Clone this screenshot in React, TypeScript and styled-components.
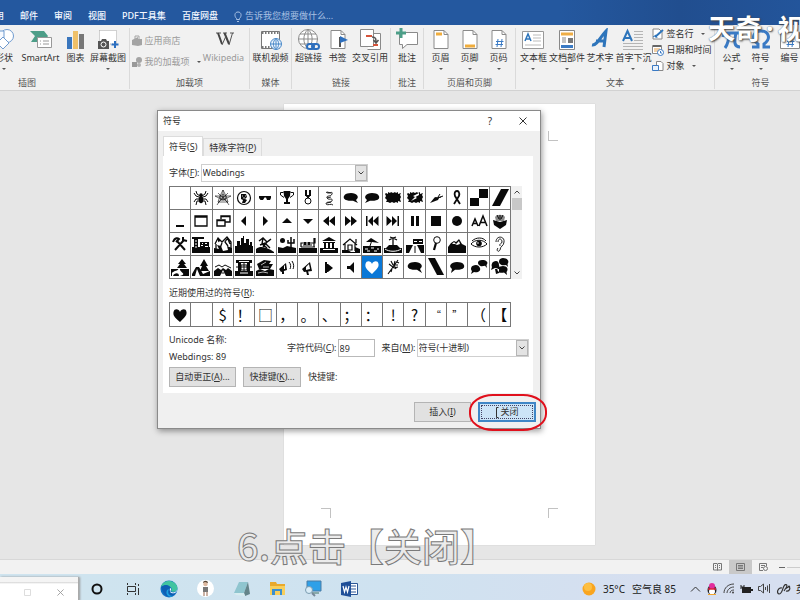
import React from "react";
import styled, { createGlobalStyle, css } from "styled-components";

const GlobalStyle = createGlobalStyle`
  *, *::before, *::after { box-sizing: border-box; }
  body { margin: 0; overflow: hidden; }
  body, button, input, select {
    font-family: "Noto Sans", "Noto Sans CJK SC", sans-serif;
    font-size: 9px;
    line-height: 12px;
    color: #333;
  }
  button, input, select { margin: 0; padding: 0; border: 0; border-radius: 0; background: none; }
  svg { display: block; flex: none; }
`;

const Screen = styled.div`
  position: relative;
  display: flex;
  flex-direction: column;
  height: 100vh;
  overflow: hidden;
  background: #e6e6e6;
`;

/* ---------- ribbon ---------- */

const TabBar = styled.nav`
  display: flex;
  flex: none;
  align-items: flex-end;
  gap: 16px;
  height: 25px;
  padding-bottom: 3px;
  background: linear-gradient(90deg, #24589f 70%, #214e8f 85%, #23559b);
`;

const RibbonTab = styled.button<{ $clipped?: boolean }>`
  flex: none;
  color: #f4f8ff;
  font-weight: 500;
  white-space: nowrap;
  ${(p) => p.$clipped && css`
    display: flex;
    justify-content: flex-end;
    width: 4px;
    overflow: hidden;
  `}
`;

const TellMe = styled.button`
  display: flex;
  align-items: center;
  gap: 3px;
  color: #a9c1e3;
  white-space: nowrap;
`;

const Ribbon = styled.div`
  display: flex;
  flex: none;
  height: 66px;
  overflow: hidden;
  background: #f1f1f1;
  border-bottom: 1px solid #d2d2d2;
`;

const Group = styled.section<{ $w: number }>`
  display: flex;
  flex: none;
  flex-direction: column;
  justify-content: space-between;
  width: ${(p) => p.$w}px;
  margin: 3px 0 1px;
  border-right: 1px solid #dadada;
`;

const GroupTools = styled.div<{ $shift?: number }>`
  display: flex;
  justify-content: ${(p) => (p.$shift ? "flex-start" : "center")};
  margin-left: ${(p) => -(p.$shift ?? 0)}px;
`;

const GroupLabel = styled.div<{ $w?: number }>`
  width: ${(p) => (p.$w ? `${p.$w}px` : "auto")};
  color: #555;
  text-align: center;
`;

const ToolButton = styled.button<{ $w: number; $muted?: boolean }>`
  display: flex;
  flex: none;
  flex-direction: column;
  align-items: center;
  gap: 2px;
  width: ${(p) => p.$w}px;
  color: ${(p) => (p.$muted ? "#9a9a9a" : "#333")};
  white-space: nowrap;
`;

const Caret = styled.span`
  width: 0;
  height: 0;
  margin: 2px 0 0;
  border: 2px solid transparent;
  border-top-color: #555;
  border-bottom-width: 0;
`;

const SmallTools = styled.div<{ $gap: number; $top?: number }>`
  display: flex;
  flex-direction: column;
  gap: ${(p) => p.$gap}px;
  padding-top: ${(p) => p.$top ?? 0}px;
`;

const SmallTool = styled.button<{ $muted?: boolean }>`
  display: flex;
  align-items: center;
  gap: 2px;
  color: ${(p) => (p.$muted ? "#9a9a9a" : "#333")};
  white-space: nowrap;

  ${Caret} { margin: 0 0 0 5px; }
`;

/* ---------- document ---------- */

const Workspace = styled.main`
  display: flex;
  flex: 1;
  min-height: 0;
  padding: 13px 25.6% 14px 35.5%;
`;

const Paper = styled.div`
  display: grid;
  flex: 1;
  grid-template-columns: auto auto;
  place-content: space-between;
  padding: 27px 37px;
  background: #fff;
  box-shadow: 0 0 1px #bbb;
`;

const CropMark = styled.span<{ $edges: string }>`
  width: 10px;
  height: 10px;
  border: 0 solid #c2c2c2;
  border-width: ${(p) => p.$edges};
`;

const StatusBar = styled.footer`
  display: flex;
  flex: none;
  align-items: stretch;
  justify-content: flex-end;
  height: 15px;
  background: #f2f2f2;
  border-top: 1px solid #d8d8d8;
`;

const ViewButton = styled.button<{ $on?: boolean }>`
  display: flex;
  align-items: center;
  justify-content: center;
  width: 23px;
  background: ${(p) => (p.$on ? "#c9c9c9" : "transparent")};
`;

const ZoomTrack = styled.span`
  display: flex;
  align-items: center;
  gap: 2px;
  width: 25px;
  padding-left: 4px;

  &::before { content: ""; width: 6px; height: 1px; background: #666; }
  &::after { content: ""; flex: 1; height: 1px; background: #ccc; }
`;

/* ---------- taskbar ---------- */

const Taskbar = styled.footer`
  display: flex;
  flex: none;
  align-items: center;
  justify-content: space-between;
  height: 26px;
  padding-top: 3px;
  overflow: hidden;
  background: linear-gradient(90deg, #cfe4ef 10%, #cfe2f0 50%, #d6dff0 80%);
`;

const TaskApps = styled.div`
  display: flex;
  align-items: center;
`;

const TaskApp = styled.button`
  display: flex;
  align-items: center;
  justify-content: center;
  width: 36px;
  height: 23px;
`;

const MiniWindow = styled.div`
  display: flex;
  align-items: center;
  justify-content: flex-end;
  gap: 26px;
  width: 79px;
  height: 24px;
  padding: 8px 14px 0 0;
  background: linear-gradient(#f4f4f4 5px, #d4d4d4 5px, #fff 7px);
  border-right: 1px solid #aaa;
  box-shadow: 1px 0 2px #999;
`;

const MiniButton = styled.button`
  display: flex;
`;

const Tray = styled.div`
  display: flex;
  align-items: center;
  gap: 5px;
  margin-right: -6px;
  color: #222;
  font-size: 10px;
  white-space: nowrap;
`;

const Weather = styled.button`
  display: flex;
  align-items: center;
  gap: 7px;
  margin-right: 9px;
  color: #222;
  font-size: 10px;
`;

/* ---------- dialog ---------- */

const Dialog = styled.div`
  position: absolute;
  top: 110px;
  left: 157px;
  display: flex;
  flex-direction: column;
  width: 384px;
  background: #f0f0f0;
  border: 1px solid #8a8a8a;
  box-shadow: 1px 2px 6px rgba(0, 0, 0, 0.4);
`;

const DialogTitle = styled.header`
  display: flex;
  align-items: center;
  height: 20px;
  padding: 0 12px 0 5px;
  background: #fff;
`;

const TitleText = styled.span`
  flex: 1;
`;

const TitleButton = styled.button`
  display: flex;
  justify-content: center;
  width: 10px;
  margin-left: 23px;
  font-size: 10px;
`;

const TabStrip = styled.div`
  display: flex;
  align-items: flex-end;
  height: 25px;
  padding: 0 5px;
`;

const DialogTab = styled.button<{ $active?: boolean }>`
  height: ${(p) => (p.$active ? 20 : 18)}px;
  padding: 0 5px;
  background: ${(p) => (p.$active ? "#fff" : "#f0f0f0")};
  border: 1px solid #dcdcdc;
  border-bottom: 0;
`;

const Panel = styled.div`
  display: flex;
  flex-direction: column;
  align-items: flex-start;
  margin: 0 7px 0 5px;
  padding: 8px 4px 6px 6px;
  background: #fff;
`;

const FieldRow = styled.div`
  display: flex;
  align-items: center;
`;

const SelectBox = styled.span<{ $w: number }>`
  display: flex;
  width: ${(p) => p.$w}px;
  height: 18px;
  border: 1px solid #cfcfcf;

  select {
    flex: 1;
    min-width: 0;
    padding-left: 1px;
    appearance: none;
    outline: 0;
  }
`;

const SelectArrow = styled.span`
  display: flex;
  align-items: center;
  justify-content: center;
  width: 12px;
  background: #e3e3e3;
  border: 1px solid #b5b5b5;
`;

const SymbolArea = styled.div`
  display: flex;
  margin-top: 4px;
`;

const SymbolGrid = styled.div<{ $row: number }>`
  display: grid;
  grid-template-columns: repeat(16, minmax(0, 1fr));
  grid-auto-rows: ${(p) => p.$row}px;
  width: 342px;
  border: 1px solid #777;
  border-width: 1px 0 0 1px;
`;

const SymbolCell = styled.button<{ $selected?: boolean; $small?: boolean }>`
  display: flex;
  align-items: center;
  justify-content: center;
  overflow: hidden;
  color: ${(p) => (p.$selected ? "#fff" : "#0a0a0a")};
  background: ${(p) => (p.$selected ? "#0a78d7" : "#fff")};
  border-right: 1px solid #777;
  border-bottom: 1px solid #777;
  font-family: "Noto Sans CJK SC", sans-serif;
  font-size: ${(p) => (p.$small ? 10 : 15)}px;
  line-height: 22px;
`;

const ScrollBar = styled.div`
  display: flex;
  flex-direction: column;
  align-items: center;
  width: 11px;
  padding: 4px 0;
  background: #f1f1f1;
`;

const ScrollThumb = styled.span`
  width: 10px;
  height: 12px;
  margin: 4px 0 auto;
  background: #c8c8c8;
`;

const RecentLabel = styled.div`
  margin: 8px 0 3px;
`;

const InfoRow = styled.div`
  display: flex;
  align-items: center;
  width: 100%;
  margin-top: 4px;
`;

const NameBlock = styled.div`
  width: 118px;
  line-height: 17px;
`;

const FieldLabel = styled.label<{ $gap?: number }>`
  margin: 0 1px 0 ${(p) => p.$gap ?? 0}px;
  white-space: nowrap;
`;

const CodeInput = styled.input`
  width: 37px;
  height: 18px;
  padding: 0 1px;
  border: 1px solid #b9b9b9;
`;

const ActionRow = styled.div`
  display: flex;
  align-items: center;
  gap: 7px;
  margin-top: 2px;
`;

const PushButton = styled.button<{ $w: number; $focus?: boolean }>`
  display: flex;
  align-items: center;
  justify-content: center;
  width: ${(p) => p.$w}px;
  height: 20px;
  background: #e1e1e1;
  border: 1px solid #b4b4b4;
  ${(p) => p.$focus && css`
    background: #cce4f7;
    border: 2px solid #3f86c6;
    outline: 1px dotted #446;
    outline-offset: -4px;
  `}
`;

const DialogFooter = styled.div`
  display: flex;
  justify-content: flex-end;
  gap: 7px;
  padding: 9px 4px 6px;
`;

const RedRing = styled.span`
  position: absolute;
  right: -7px;
  bottom: -3px;
  width: 78px;
  height: 37px;
  border: 2px solid #e0101c;
  border-radius: 24px / 17px;
  pointer-events: none;
`;

/* ---------- overlays ---------- */

const Subtitle = styled.p`
  position: absolute;
  bottom: 33px;
  left: 237px;
  margin: 0;
  color: rgba(234, 234, 234, 0.9);
  font-family: "Noto Sans CJK SC", sans-serif;
  font-size: 38px;
  font-weight: 500;
  line-height: 44px;
  white-space: nowrap;
  -webkit-text-stroke: 1px #7a7a7a;
`;

const Watermark = styled.p`
  position: absolute;
  top: 11px;
  left: 708px;
  display: flex;
  gap: 4px;
  margin: 0;
  color: #fff;
  font-family: "Noto Sans CJK SC", sans-serif;
  font-size: 27px;
  font-weight: 700;
  line-height: 34px;
  white-space: nowrap;
  text-shadow: 1px 1px 2px #444, 0 0 1px #555;
`;

const WatermarkDot = styled.span`
  font-family: "Noto Sans", sans-serif;
`;

/* ---------- symbol glyphs, drawn on a 20 x 20 field ---------- */

const line = { fill: "none", stroke: "currentColor" } as const;

const glyphs: React.ReactNode[] = [
  null,
  <g key="spider">
    <ellipse cx="10" cy="11.500" rx="2.300" ry="3.800" /><circle cx="10" cy="7" r="1.800" />
    <path {...line} d="M9 8 6 6 5 3M8 9 5 8 3 5M8 11 5 11 3 14M9 13 6 13 5 17M11 8 14 6 15 3M12 9 15 8 17 5M12 11 15 11 17 14M11 13 14 13 15 17" />
  </g>,
  <g key="web" {...line} strokeWidth=".6">
    <path d="M10 2V12M2 8 18 8M4 17 10 8 16 17M2 8 10 12 18 8M10 2 7 8 5 14H15L13 8ZM7 8 10 6 13 8 12 12H8ZM5 5 15 15M15 5 5 15" />
  </g>,
  <g key="face">
    <circle {...line} cx="10" cy="10" r="6.500" strokeWidth="1.200" />
    <path d="M7 6H12L13 9 11 11 13 12 11 15H8L9 12 7 11Z" /><path stroke="#fff" strokeWidth=".8" d="M8 8H9M11 8H12M9 10H11" />
  </g>,
  <path key="glasses" d="M4 8H16V10L15 12H12L11 9.500H9.500L8 12H5.500L4 10Z" />,
  <g key="trophy"><path d="M6.500 3H13.500L13 8 11 11V14H13V16H7V14H9V11L7 8Z" /><path {...line} d="M6.500 4.500H3.500V7L7 9.500M13.500 4.500H16.500V7L13 9.500" /></g>,
  <g key="medal"><path d="M7 2H9V8H7ZM11 2H13V8H11ZM9 7H11V10H9Z" /><path {...line} d="M7.500 7 10 10 12.500 7" /><circle {...line} cx="10" cy="13" r="3" /></g>,
  <path key="scroll" {...line} strokeWidth=".9" d="M7 4C10 7 14 2 13 6 12 9 7 7 8 10 10 13 14 9 13 13 12 15 7 13 7 16 9 18 12 15 14 17M8 4 12 5M8 10 12 9M8 15 12 14" />,
  <path key="speech-r" d="M10 5C4 5 2 8 3 10.500 5 13 9 13 12 12.700L17 15 15 12C19 9 16 5 10 5Z" />,
  <path key="speech-l" d="M10 5C16 5 18 8 17 10.500 15 13 11 13 8 12.700L3 15 5 12C1 9 4 5 10 5Z" />,
  <path key="burst" d="M3 5 5 6 5 4 7 5 8 4 10 5 12 4 13 5 15 4 15 6 18 5 17 7 18 9 17 11 18 14 15 13 15 15 13 14 11 15 9 14 7 15 5 14 3 14 4 12 2 10 3 8 2 6Z" />,
  <g key="flash"><path d="M3 5 5 6 5 4 7 5 8 4 10 5 12 4 13 5 15 4 15 6 18 5 17 7 18 9 17 11 18 14 15 13 15 15 13 14 11 15 9 14 7 15 5 14 3 14 4 12 2 10 3 8 2 6Z" /><path fill="#fff" d="M14 5 8 8 10 9 6 13 12 10 10.500 9 14 7Z" /></g>,
  <g key="carrot"><path d="M4 15 9 9 13 10 12 12Z" /><path {...line} d="M12 10 17 8M12 9 14 6M10 10 15 9" /></g>,
  <path key="ribbon" {...line} strokeWidth="1.800" d="M7 16 12 8C13 4 11 3 10 3 8 3 7 5 8 8L13 16" />,
  <path key="checker" d="M10 1H19V10H10ZM1 10H10V18H1Z" />,
  <path key="slash" d="M11 1H19L10 18H2Z" />,

  <path key="min" d="M6 14H14V16H6Z" />,
  <path key="max" {...line} strokeWidth="1.300" d="M4 5H16V15H4ZM4 6.200H16" />,
  <path key="restore" {...line} strokeWidth="1.400" d="M8 8V5H17V11H12M8 5.600H17M4 9H12V15H4ZM4 9.600H12" />,
  <path key="left" d="M12 5V15L7 10Z" />,
  <path key="right" d="M8 5V15L13 10Z" />,
  <path key="up" d="M5 12H15L10 7Z" />,
  <path key="down" d="M5 8H15L10 13Z" />,
  <path key="rew" d="M10 5V15L4 10ZM16 5V15L10 10Z" />,
  <path key="ff" d="M4 5V15L10 10ZM10 5V15L16 10Z" />,
  <path key="prev" d="M4 5H5.500V15H4ZM11 5V15L6 10ZM16.500 5V15L11 10Z" />,
  <path key="next" d="M3.500 5V15L9 10ZM9 5V15L14 10ZM14.500 5H16V15H14.500Z" />,
  <path key="pause" d="M6 5H9V15H6ZM11 5H14V15H11Z" />,
  <path key="stop" d="M5 5H15V15H5Z" />,
  <circle key="rec" cx="10" cy="10" r="5" />,
  <g key="aa" {...line} strokeWidth="1.500"><path d="M3 15 6 8 9 15M4 12.500H8M10 15 14 5 18 15M11.500 11.500H16.500" /></g>,
  <g key="hat"><path d="M3 9 10 11 17 9 16 14 10 18 4 14Z" /><path d="M5 6C7 3 13 3 15 6L14 10H6Z" fill="#888" /><path {...line} d="M10 4V9M7 4 9 8M13 4 11 8" /></g>,

  <g key="tools" {...line} strokeWidth="2"><path d="M5 16 14 6M7 7 15 16M3 8C5 3 8 4 9 5L6 8M13 3V6L17 7" /></g>,
  <g key="crane"><path d="M1 13H19V19H1ZM3 3H7V17H3ZM1 3H13V5H1ZM9 8H18V17H9Z" /><path stroke="#fff" d="M4 7H6M4 10H6M4 13H6M11 9.500H12M14 9.500H16M10 11.500H12M14 12.500H17" /></g>,
  <g key="houses"><path {...line} strokeWidth="1.300" d="M2 10 5 4 9 8 14 3 18 8V17M3 10V17M9 9 7 14M14 5 12 8 15 12M5 4 6 8M14 3 17 10" /><path d="M1 14 6 15 4 11 8 12 10 17 15 16 14 12 19 14V19H1Z" /></g>,
  <path key="skyline" d="M1 12H3V7H6V11H7V4H9V2H10V9H12V5H15V11H16V8H18V12H19V19H1Z" />,
  <g key="island"><path d="M1 15C6 11 13 14 19 18V19H1Z" /><path {...line} strokeWidth="1.400" d="M4 7 8 4 12 8 16 5M8 4 7 10 12 14M5 11 10 9 15 14M12 8 8 13M15 6 8 11" /></g>,
  <g key="desert"><circle cx="5.500" cy="6.500" r="2.500" /><path d="M1 13 6 14 10 12 19 14V19H1Z" /><path {...line} strokeWidth="1.500" d="M14 3V14M11 6V9H14M17 5V9H14" /></g>,
  <g key="factory"><path d="M1 14H19V19H1Z" /><path {...line} d="M3 13V9H17V4M16 4V13M5 11H14M3 13H17" strokeWidth="1.200" /><path d="M6 8H8V11H6ZM10 8H12V11H10Z" /></g>,
  <g key="temple"><path d="M1 14H19V19H1ZM3 7 10 3 17 7ZM4 8H16V9H4ZM5 9H7V15H5ZM9 9H11V15H9ZM13 9H15V15H13Z" /><path stroke="#fff" d="M4 15.500H16" /></g>,
  <g key="home"><path {...line} d="M2 11 9 5 16 11M4 10V17M14 10V17M7 11H11V16H7ZM15 5V9" strokeWidth="1.200" /><path d="M1 16H7L10 18H19V19H1ZM14 13 19 15V18H14Z" /></g>,
  <g key="beach"><path d="M4 8 9 4 17 9 10 8Z" /><path {...line} d="M10 6 8 12" /><path d="M1 12H19V19H1Z" /><path stroke="#fff" d="M3 15H6M9 14H12M15 15H17M5 17H8M12 17H15" /></g>,
  <g key="palm"><path {...line} strokeWidth="1.300" d="M10 12V5M6 6 10 4 14 6M7 3 10 4 13 3" /><path d="M6 11H14L17 14H3ZM1 14H19V19H1Z" /><path fill="none" stroke="#fff" d="M2 15C6 18 14 18 18 15" /></g>,
  <g key="highway"><path d="M1 11H19V19H1ZM8 5H18V10H8Z" /><path fill="#fff" d="M8 11H12L16 19H4Z" /><path {...line} d="M10 12V19" /><path stroke="#fff" d="M9 7.500H12M14 7.500H17" /></g>,
  <g key="lens"><circle {...line} cx="11" cy="6" r="3.300" /><path {...line} strokeWidth="2.200" d="M10 9 8 16" /></g>,
  <g key="mountain"><path d="M1 13 4 9 7 7 9 8 12 5 15 10 19 12V19H1Z" /><path d="M5 10 7 8 9 10 12 7 13 10 10 11 8 10Z" fill="#fff" /></g>,
  <g key="eye"><path {...line} strokeWidth="1" d="M2 10C6 5 14 5 18 10 14 14 6 14 2 10ZM3 7C7 3 14 3 17 7" /><circle cx="10" cy="9.500" r="2.800" /><circle cx="9" cy="9" r=".8" fill="#fff" /></g>,
  <path key="ear" {...line} strokeWidth=".9" d="M6 8C6 1 15 2 14 8 14 12 10 12 10 16 8 19 6 16 8 14M8 8C8 4 12 4 12 8 12 10 9 9 10 12" />,

  <g key="road"><path d="M12 2 16 7H14L17 11H7L10 7H8ZM1 12H8C10 13 3 14 2 16V19H1ZM10 12H19V19H10C18 17 9 15 10 12ZM3 19C4 16 9 15 9 19Z" /></g>,
  <g key="camp"><path d="M13 2 17 9H15L18 14H9L11 9H9ZM1 17 5 10 8 10 12 17 19 14V19H1Z" /><path fill="#fff" d="M6 12 9 19H4Z" /></g>,
  <g key="valley"><path d="M1 14 5 11 8 13 10 11 13 13 15 11 19 14V19H13L10 13 7 19H1Z" /><path {...line} d="M2 10 6 8 9 10 12 8 18 11M8.500 16H11.500" /></g>,
  <g key="stadium"><path d="M1 14H19V19H1ZM2 3H18V6H2ZM4 6H7V15H4ZM13 6H16V15H13Z" /><path {...line} d="M7 8H13V13H7ZM10 4V16M2 10H18" /><path stroke="#fff" d="M5 4.500H15M6 16H14" /></g>,
  <g key="ship"><path d="M2 7 9 3 16 4 14 7 18 7 15 12H4Z" /><path d="M1 14 5 12 10 14 14 12 19 13V19H1Z" /><path stroke="#fff" strokeWidth=".7" d="M6 8 11 5M8 10H14M3 16 8 15 13 16" /></g>,
  <g key="horns"><path d="M2 12 9 6 10 13 4 15ZM5 14H7V17H5Z" /><path fill="#fff" d="M7 9 8 8V12L7 12Z" /><path {...line} d="M12 5C14 7 14 10 13 12M15 4C17 7 17 10 16 12" /></g>,
  <g key="horn"><path d="M4 12 12 5 14 14 6 15ZM8 14H10L11 18H9Z" /><path fill="#fff" d="M8 10 11 7 12 12 8 13Z" /></g>,
  <path key="vol-r" d="M6 7H9L14 11 9 15H6ZM6 5H8V16H6Z" />,
  <path key="vol-l" d="M13 5V16L9 12H6V9H9Z" />,
  <path key="heart" d="M10 17C4 12 3 10 3.500 7 4.500 3 9 4 10 7 11 4 16 3 16.500 7 17 10 15 12 10 17Z" />,
  <path key="fly" {...line} strokeWidth="1.100" d="M5 17 10 10 15 3M8 4 10 8 15 8M6 7 11 11 15 10M12 4 11 8 13 12M9 12 8 15M14 5 16 6" />,
  <path key="talk-r" d="M10 5C4 5 2 8 3 10.500 5 13 9 13 12 12.700L17 16 15 12C19 9 16 5 10 5Z" />,
  <path key="backslash" d="M2 1H9L18 18H11Z" />,
  <path key="talk-l" d="M10 5C16 5 18 8 17 10.500 15 13 11 13 8 12.700L4 16 5 12C1 9 4 5 10 5Z" />,
  <path key="two" d="M13 3C9 3 8 6 10 8 12 10 14 9 16 8.800L18 11 17.500 8C20 5 17 3 13 3ZM7 8C2 8 1 12 3 14L2 17 5 15C9 16 12 14 11 11 10 9 9 8 7 8Z" />,
  <path key="three" d="M13 1C9 1 8 5 10 7 12 9 14 8 16 8L18 10 17.500 7C20 4 17 1 13 1ZM6 4C2 4 1 8 2 10L1 13 5 11C9 12 10 10 9 8 9 6 8 4 6 4ZM13 9C9 9 6 12 8 14 9 16 12 16 14 15.500L17 18 16.500 15C19 12 17 9 13 9ZM5 12 9 12 9 16 6 17Z" />,
];

const SELECTED = 57;
const recent = ["♥", "", "$", "！", "□", "，", "。", "、", "；", "：", "!", "?", "“", "”", "（", "【"];

/* ---------- ribbon icons, drawn on a 22 x 22 field ---------- */

const Icon = ({ children, w = 22, h = 22, vb = "0 0 22 22" }: { children: React.ReactNode; w?: number; h?: number; vb?: string }) => (
  <svg width={w} height={h} viewBox={vb} fill="none" aria-hidden="true">{children}</svg>
);

const Sheet = ({ children }: { children?: React.ReactNode }) => (
  <Icon>
    <path d="M4 2.500H14L18 6.500V20.500H4Z" fill="#fff" stroke="#8a8a8a" />
    <path d="M14 2.500V6.500H18" stroke="#8a8a8a" />
    {children}
  </Icon>
);

const icons = {
  shapes: <Icon><circle cx="14" cy="8" r="6.500" stroke="#6f9bd0" fill="#fff" /><path d="M2 3H11V12H2Z" stroke="#6f9bd0" fill="#f7faff" /><path d="M10 9 16 15 10 21 4 15Z" fill="#fff" stroke="#6f9bd0" /></Icon>,
  smartart: <Icon><path d="M0 3H14L18 8 14 14H1L5 8Z" fill="#4d9e88" /><path d="M7.500 9.500H21.500V19.500H7.500Z" fill="#fff" stroke="#999" /><path d="M10 13H11M10 16H11M13 13H19M13 16H19" stroke="#999" /></Icon>,
  chart: <Icon><path d="M2 9H7V21H2Z" fill="#3a76bd" /><path d="M8 3H13V21H8Z" fill="#efc069" /><path d="M14 6H19V21H14Z" fill="#777" /></Icon>,
  shot: <Icon><path d="M2.500 2.500H19.500V16H2.500Z" fill="#fff" stroke="#aaa" strokeDasharray="1 1" /><path d="M1 13H4L5 11H9L10 13H12V21H1Z" fill="#555" /><circle cx="6.500" cy="16.500" r="2.500" stroke="#fff" /><path d="M18 13V20M14.500 16.500H21.500" stroke="#2b6fc0" strokeWidth="2" /></Icon>,
  store: <Icon w={10} h={12} vb="0 0 10 12"><path d="M0 5 6 2V11L0 10ZM6 4H10V10L6 11Z" fill="#a4a4a4" /><path d="M3 4V1H7V4" stroke="#a4a4a4" /></Icon>,
  addins: <Icon w={10} h={12} vb="0 0 10 12"><circle cx="7" cy="4" r="3" fill="#a4a4a4" /><path d="M0 6H5V11H0Z" fill="#999" /><circle cx="7" cy="9" r="2" fill="#b0b0b0" /></Icon>,
  video: <Icon><path d="M1.500 3.500H19.500V20.500H1.500Z" fill="#fff" stroke="#777" /><path d="M2 5H19M2 19H19" stroke="#777" strokeWidth="2" strokeDasharray="1.500 1.500" /><circle cx="16" cy="16" r="5.500" fill="#eaf3fc" stroke="#4b8ac9" /><path d="M10.500 16H21.500M16 10.500V21.500M16 10.500C12.500 13 12.500 19 16 21.500M16 10.500C19.500 13 19.500 19 16 21.500" stroke="#4b8ac9" /></Icon>,
  link: <Icon><circle cx="10" cy="11" r="9.500" fill="#fff" stroke="#8b8b8b" /><path d="M.5 11H19.500M10 1.500V20.500M2 6H18M2 16H18M10 1.500C4.500 6 4.500 16 10 20.500M10 1.500C15.500 6 15.500 16 10 20.500" stroke="#8b8b8b" /><rect x="9" y="16" width="7" height="5" rx="2.500" fill="#f1f1f1" stroke="#2e6fbd" strokeWidth="2" /><rect x="14" y="16" width="7" height="5" rx="2.500" stroke="#2e6fbd" strokeWidth="2" /></Icon>,
  bookmark: <Sheet><path d="M13 9V19" stroke="#555" strokeWidth="2" /><path d="M13 8 21 12 13 15Z" fill="#2e6fbd" /></Sheet>,
  crossref: <Icon><path d="M12.500 5.500H21.500V21.500H8.500" fill="#fff" stroke="#8a8a8a" /><path d="M1.500 1.500H14.500V18.500H1.500Z" fill="#fff" stroke="#8a8a8a" /><path d="M7 8H13M14 17H19" stroke="#d5543b" strokeWidth="2" /><path d="M13 9C17 9 17 11 17 14M14.500 12 17 15 19.500 12" stroke="#555" strokeWidth="1.500" /></Icon>,
  comment: <Icon><path d="M3.500 4.500H21.500V16.500H11L6.500 20.500V16.500H3.500Z" fill="#fff" stroke="#8a8a8a" /><path d="M5 0V10M0 5H10" stroke="#4d9e88" strokeWidth="3" /></Icon>,
  header: <Sheet><path d="M6 6H12" stroke="#f0ad3d" strokeWidth="3" /></Sheet>,
  footer: <Sheet><path d="M6 18H16" stroke="#f0ad3d" strokeWidth="3" /></Sheet>,
  pageno: <Sheet><path d="M10 11 9 19M14 11 13 19M8 13.500H15.500M7.500 16.500H15" stroke="#3a7ac4" /></Sheet>,
  textbox: <Icon><path d="M.5 3.500H21.500V20.500H.5Z" fill="#fff" stroke="#999" /><path d="M3 13 6 6 9 13M4.500 11H8" stroke="#2e75bb" strokeWidth="1.500" /><path d="M11 7H19M11 10H19M11 13H19M3 17H19" stroke="#bbb" /></Icon>,
  parts: <Icon><path d="M3.500 2.500H18.500V21.500H3.500Z" fill="#fff" stroke="#888" /><path d="M5 6H17" stroke="#eead45" strokeWidth="3" /><path d="M6 10H10M6 12H10M6 14H10" stroke="#888" /><path d="M12 10H17V15H12Z" fill="#777" /><path d="M5 18.500H17" stroke="#3a7ac4" strokeWidth="3" /></Icon>,
  wordart: <Icon><path d="M3 17C8 18 12 8 17 3L15 19M7 13H16" stroke="#2e75bb" strokeWidth="3" /></Icon>,
  dropcap: <Icon><path d="M1 13 5.500 3 10 13M3 10H8" stroke="#2e75bb" strokeWidth="2" /><path d="M12 3.500H21M12 6.500H21M12 9.500H21M12 12.500H21M1 15.500H21M1 18.500H21M1 21.500H21" stroke="#b5b5b5" /></Icon>,
  sign: <Icon w={12} h={12} vb="0 0 12 12"><path d="M1 1H7L10 4V11H1Z" fill="#fff" stroke="#888" /><path d="M3 9 11 2" stroke="#2e75bb" strokeWidth="2" /><path d="M1 9 4 7 5 10" stroke="#2e75bb" /></Icon>,
  date: <Icon w={12} h={12} vb="0 0 12 12"><path d="M.5 1.500H9.500V9.500H.5Z" fill="#fff" stroke="#888" /><path d="M1 2H9" stroke="#666" strokeWidth="2" /><path d="M2 5H8M2 7H6" stroke="#e5a14f" /><circle cx="8.500" cy="8.500" r="3" fill="#fff" stroke="#3a7ac4" /><path d="M8.500 7V9H10" stroke="#3a7ac4" /></Icon>,
  object: <Icon w={12} h={12} vb="0 0 12 12"><path d="M4.500 1.500H9L11 3.500V10.500H4.500Z" fill="#fff" stroke="#888" /><path d="M.5 5.500H6.500V10.500H.5Z" fill="#e8f2fc" stroke="#3a7ac4" /></Icon>,
  pi: <Icon><path d="M2 9C3 5 4 5 7 5H20M8 5C8 12 7 16 4 20M15 5C13 14 13 19 19 19" stroke="#3a7ac4" strokeWidth="3" /></Icon>,
  omega: <Icon><path d="M2 19H8V16C0 10 4 3 11 3S22 10 14 16V19H20" stroke="#3a7ac4" strokeWidth="3" /></Icon>,
  number: <Icon><path d="M1.500 4.500H20.500V20.500H1.500Z" fill="#fff" stroke="#888" /><path d="M10 11 9 19M14 11 13 19M8 13.500H15.500M7.500 16.500H15" stroke="#3a7ac4" /></Icon>,
  wiki: <Icon><path d="M3 5H8M10 5H14M17 5H21" stroke="#555" /><path d="M5 5 9 16M11.500 5 16 16" stroke="#444" strokeWidth="2" /><path d="M9 17 13 8M16 17 19.500 5" stroke="#555" /></Icon>,
};

type ToolProps = { icon: React.ReactNode; label: string; w: number; menu?: boolean; muted?: boolean };
const Tool = ({ icon, label, w, menu, muted }: ToolProps) => (
  <ToolButton type="button" $w={w} $muted={muted}>
    {icon}
    <span>{label}</span>
    {menu && <Caret />}
  </ToolButton>
);

const Chevron = ({ up }: { up?: boolean }) => (
  <svg width="6" height="4" viewBox="0 0 6 4" fill="none" stroke="#444">
    <path d={up ? "M.5 3.500 3 1 5.500 3.500" : "M.5 .5 3 3 5.500 .5"} />
  </svg>
);

const Cross = ({ size, color }: { size: number; color: string }) => (
  <svg width={size} height={size} viewBox="0 0 8 8" fill="none" stroke={color}>
    <path d="M.5 .5 7.500 7.500M7.500 .5 .5 7.500" />
  </svg>
);

function SymbolDialog() {
  return (
    <Dialog role="dialog" aria-labelledby="dialog-title">
      <DialogTitle>
        <TitleText id="dialog-title">符号</TitleText>
        <TitleButton type="button">?</TitleButton>
        <TitleButton type="button"><Cross size={8} color="#333" /></TitleButton>
      </DialogTitle>
      <TabStrip role="tablist">
        <DialogTab type="button" role="tab" aria-selected="true" $active>符号(<u>S</u>)</DialogTab>
        <DialogTab type="button" role="tab" aria-selected="false">特殊字符(<u>P</u>)</DialogTab>
      </TabStrip>
      <Panel>
        <FieldRow>
          <FieldLabel htmlFor="font">字体(<u>F</u>):</FieldLabel>
          <SelectBox $w={167}>
            <select id="font" defaultValue="w"><option value="w">Webdings</option></select>
            <SelectArrow><Chevron /></SelectArrow>
          </SelectBox>
        </FieldRow>
        <SymbolArea>
          <SymbolGrid $row={23}>
            {glyphs.map((glyph, i) => (
              <SymbolCell type="button" key={i} $selected={i === SELECTED}>
                <svg width="20" height="20" viewBox="0 0 20 20" fill="currentColor">{glyph}</svg>
              </SymbolCell>
            ))}
          </SymbolGrid>
          <ScrollBar><Chevron up /><ScrollThumb /><Chevron /></ScrollBar>
        </SymbolArea>
        <RecentLabel>近期使用过的符号(<u>R</u>):</RecentLabel>
        <SymbolGrid $row={24}>
          {recent.map((ch, i) => (
            <SymbolCell type="button" key={i} $small={ch === "“" || ch === "”"}>
              {ch === "♥" ? <svg width="20" height="20" viewBox="0 0 20 20" fill="currentColor">{glyphs[SELECTED]}</svg> : ch}
            </SymbolCell>
          ))}
        </SymbolGrid>
        <InfoRow>
          <NameBlock>Unicode 名称:<br />Webdings: 89</NameBlock>
          <FieldLabel htmlFor="code">字符代码(<u>C</u>):</FieldLabel>
          <CodeInput id="code" defaultValue="89" />
          <FieldLabel htmlFor="from" $gap={7}>来自(<u>M</u>):</FieldLabel>
          <SelectBox $w={112}>
            <select id="from" defaultValue="d"><option value="d">符号(十进制)</option></select>
            <SelectArrow><Chevron /></SelectArrow>
          </SelectBox>
        </InfoRow>
        <ActionRow>
          <PushButton type="button" $w={67}>自动更正(<u>A</u>)...</PushButton>
          <PushButton type="button" $w={58}>快捷键(<u>K</u>)...</PushButton>
          <span>快捷键:</span>
        </ActionRow>
      </Panel>
      <DialogFooter>
        <PushButton type="button" $w={57}>插入(<u>I</u>)</PushButton>
        <PushButton type="button" $w={58} $focus>
          <svg width="5" height="11" viewBox="0 0 5 11" fill="none" stroke="#333"><path d="M3.500 .5H1.500V10.500H3.500" /></svg>
          关闭
        </PushButton>
      </DialogFooter>
      <RedRing />
    </Dialog>
  );
}

export default function App() {
  return (
    <Screen>
      <GlobalStyle />
      <TabBar>
        <RibbonTab type="button" $clipped>引用</RibbonTab>
        {["邮件", "审阅", "视图", "PDF工具集", "百度网盘"].map((t) => (
          <RibbonTab type="button" key={t}>{t}</RibbonTab>
        ))}
        <TellMe type="button">
          <svg width="8" height="11" viewBox="0 0 8 11" fill="none" stroke="currentColor"><path d="M2.500 7.500C0 5 .5 1 4 1S8 5 5.500 7.500V8.500H2.500ZM3 10.500H5" /></svg>
          告诉我您想要做什么...
        </TellMe>
      </TabBar>

      <Ribbon>
        <Group $w={130}>
          <GroupTools $shift={11}>
            <Tool icon={icons.shapes} label="形状" w={30} menu />
            <Tool icon={icons.smartart} label="SmartArt" w={43} />
            <Tool icon={icons.chart} label="图表" w={27} />
            <Tool icon={icons.shot} label="屏幕截图" w={38} menu />
          </GroupTools>
          <GroupLabel $w={54}>插图</GroupLabel>
        </Group>
        <Group $w={120}>
          <GroupTools>
            <SmallTools $gap={9} $top={7}>
              <SmallTool type="button" $muted>{icons.store}应用商店</SmallTool>
              <SmallTool type="button" $muted>{icons.addins}我的加载项<Caret /></SmallTool>
            </SmallTools>
            <Tool icon={icons.wiki} label="Wikipedia" w={46} muted />
          </GroupTools>
          <GroupLabel>加载项</GroupLabel>
        </Group>
        <Group $w={42}>
          <GroupTools><Tool icon={icons.video} label="联机视频" w={38} /></GroupTools>
          <GroupLabel>媒体</GroupLabel>
        </Group>
        <Group $w={99}>
          <GroupTools>
            <Tool icon={icons.link} label="超链接" w={31} />
            <Tool icon={icons.bookmark} label="书签" w={27} />
            <Tool icon={icons.crossref} label="交叉引用" w={38} />
          </GroupTools>
          <GroupLabel>链接</GroupLabel>
        </Group>
        <Group $w={33}>
          <GroupTools><Tool icon={icons.comment} label="批注" w={30} /></GroupTools>
          <GroupLabel>批注</GroupLabel>
        </Group>
        <Group $w={92}>
          <GroupTools>
            <Tool icon={icons.header} label="页眉" w={29} menu />
            <Tool icon={icons.footer} label="页脚" w={29} menu />
            <Tool icon={icons.pageno} label="页码" w={29} menu />
          </GroupTools>
          <GroupLabel>页眉和页脚</GroupLabel>
        </Group>
        <Group $w={199}>
          <GroupTools>
            <Tool icon={icons.textbox} label="文本框" w={30} menu />
            <Tool icon={icons.parts} label="文档部件" w={37} menu />
            <Tool icon={icons.wordart} label="艺术字" w={29} menu />
            <Tool icon={icons.dropcap} label="首字下沉" w={38} menu />
            <SmallTools $gap={4}>
              <SmallTool type="button">{icons.sign}签名行<Caret /></SmallTool>
              <SmallTool type="button">{icons.date}日期和时间</SmallTool>
              <SmallTool type="button">{icons.object}对象<Caret /></SmallTool>
            </SmallTools>
          </GroupTools>
          <GroupLabel>文本</GroupLabel>
        </Group>
        <Group $w={92}>
          <GroupTools>
            <Tool icon={icons.pi} label="公式" w={29} menu />
            <Tool icon={icons.omega} label="符号" w={29} menu />
            <Tool icon={icons.number} label="编号" w={29} />
          </GroupTools>
          <GroupLabel>符号</GroupLabel>
        </Group>
      </Ribbon>

      <Workspace>
        <Paper>
          <CropMark $edges="0 1px 1px 0" />
          <CropMark $edges="0 0 1px 1px" />
          <CropMark $edges="1px 1px 0 0" />
          <CropMark $edges="1px 0 0 1px" />
        </Paper>
      </Workspace>

      <StatusBar>
        <ViewButton type="button"><Icon w={9} h={8} vb="0 0 9 8"><path d="M.5 .5H4L4.500 1 5 .5H8.500V7H5L4.500 7.500 4 7H.5ZM4.500 1V7M2 2.500H3M2 4.500H3M6 2.500H7M6 4.500H7" stroke="#777" /></Icon></ViewButton>
        <ViewButton type="button" $on><Icon w={9} h={8} vb="0 0 9 8"><path d="M.5 .5H8.500V7.500H.5ZM2 2.500H7M2 4H7M2 5.500H7" stroke="#777" /></Icon></ViewButton>
        <ViewButton type="button"><Icon w={9} h={8} vb="0 0 9 8"><path d="M4 7.500H.5V.5H7.500V3M2 2.500H6M2 4.500H4" stroke="#777" /><circle cx="6.500" cy="5.500" r="2" stroke="#777" /></Icon></ViewButton>
        <ZoomTrack />
      </StatusBar>

      <Taskbar>
        <TaskApps>
          <MiniWindow>
            <MiniButton type="button"><Icon w={7} h={7} vb="0 0 7 7"><path d="M.5 .5H6.500V6.500H.5Z" stroke="#ddd" /></Icon></MiniButton>
            <MiniButton type="button"><Cross size={7} color="#999" /></MiniButton>
          </MiniWindow>
          <TaskApp type="button"><Icon w={12} h={12} vb="0 0 12 12"><circle cx="6" cy="6" r="4.500" stroke="#111" strokeWidth="2" /></Icon></TaskApp>
          <TaskApp type="button"><Icon w={13} h={12} vb="0 0 13 12"><path d="M.5 3.500H8.500V8.500H.5ZM.5 0V2M8.500 2V0M.5 12V10M8.500 10V12M11.500 5V12M11.500 1V3" stroke="#333" /></Icon></TaskApp>
          <TaskApp type="button">
            <Icon w={18} h={18} vb="0 0 18 18">
              <circle cx="9" cy="9" r="8.500" fill="#1373c6" />
              <path d="M1 7C3-1 16-1 17.500 8 17 13 12 12 11 11 14 7 7 4 1 7Z" fill="#42c4a0" />
              <path d="M1 7C6 3 12 6 10 10 9 13 14 14 16 12.500 13 18 5 18 3 12Z" fill="#0f5fb4" />
              <path d="M7 10C5 15 9 18 13 16 9 16 7 13 9 9Z" fill="#1ba0e0" />
              <path d="M10 8C13 9 9 11 11 12 14 13 16 12 17 10V11L15 13C12 14 9 13 10 8Z" fill="#fff" />
            </Icon>
          </TaskApp>
          <TaskApp type="button">
            <Icon w={17} h={17} vb="0 0 17 17"><circle cx="8.500" cy="8.500" r="8.500" fill="#fff" /><circle cx="8.500" cy="4" r="2.300" fill="#deb9a0" /><path d="M6 3C6 0 11 0 11 3L8 2Z" fill="#543" /><path d="M6 7H11V12H6Z" fill="#777" /><path d="M7 12V16M10 12V16" stroke="#b98" strokeWidth="1.500" /></Icon>
          </TaskApp>
          <TaskApp type="button"><Icon w={17} h={16} vb="0 0 17 16"><path d="M6 1H15L11 12H1Z" fill="#8fc5cf" /><path d="M15 1 17 13 12 15 11 12Z" fill="#64848a" /><path d="M1 12H11L12 15 3 14Z" fill="#d8ecf0" /></Icon></TaskApp>
          <TaskApp type="button"><Icon w={17} h={15} vb="0 0 17 15"><path d="M1 1H7L8 3H16V14H1Z" fill="#e9a92c" /><path d="M1 5H16V14H1Z" fill="#f8cf5c" /><path d="M3 14V8H13V14H11V10H6V14Z" fill="#3a8fd0" /></Icon></TaskApp>
          <TaskApp type="button"><Icon w={18} h={17} vb="0 0 18 17"><path d="M3 1H17V11H3Z" fill="#2fa0e8" stroke="#4a7da5" /><path d="M8 13H15" stroke="#8aa" strokeWidth="2" /><circle cx="5" cy="10" r="3.500" fill="#d9ecf7" stroke="#7a9cb0" /><path d="M8 13 11 16" stroke="#789" strokeWidth="2" /></Icon></TaskApp>
          <TaskApp type="button"><Icon w={17} h={16} vb="0 0 17 16"><path d="M8.500 2.500H16.500V13.500H8.500Z" fill="#fff" stroke="#2b5797" /><path d="M10 5H15M10 8H15M10 11H15" stroke="#2b5797" /><path d="M0 2 10 0V16L0 14Z" fill="#1f4f98" /><path d="M2 5 3.500 11 5 6 6.500 11 8 5" stroke="#fff" strokeWidth="1.200" /></Icon></TaskApp>
        </TaskApps>
        <Tray>
          <Weather type="button">
            <Icon w={14} h={14} vb="0 0 14 14"><circle cx="7" cy="7" r="6.500" fill="#f9a51f" /><circle cx="6" cy="5" r="4" fill="#fdbf42" /></Icon>
            <span>35°C</span><span>空气良 85</span>
          </Weather>
          <Icon w={11} h={8} vb="0 0 11 8"><path d="M1 6.500 5.500 2 10 6.500" stroke="#333" /></Icon>
          <Icon w={12} h={12} vb="0 0 12 12"><ellipse cx="6" cy="7" rx="4.500" ry="5" fill="#222" /><ellipse cx="6" cy="8.500" rx="3" ry="3" fill="#fff" /><circle cx="6" cy="3" r="3" fill="#e22c9c" /><path d="M2 6H10" stroke="#e2203c" strokeWidth="1.500" /><path d="M2 11.500H10" stroke="#f3a72c" /></Icon>
          <Icon w={12} h={11} vb="0 0 12 11"><path d="M1 10C1 5 5 1 11 1M4 10C4 7 7 4 11 4M7 10C7 8 9 7 11 7" stroke="#444" /><circle cx="10" cy="9.500" r="1" fill="#444" /></Icon>
          <Icon w={13} h={10} vb="0 0 13 10"><path d="M2 3H11V9H2ZM11 5H13V7H11Z" fill="#222" /><path d="M1 1V5M4 1V3M1 3H4" stroke="#222" /></Icon>
          <Icon w={13} h={11} vb="0 0 13 11"><path d="M.5 3.500H2.500L5.500 1V10L2.500 7.500H.5ZM7.500 4V7M9.500 2.500V8.500M11.500 1V10" stroke="#444" /></Icon>
          <Icon w={15} h={12} vb="0 0 15 12"><path d="M6 5C2 4 0 10 3 11 6 11 6 7 8 3 10 0 12 2 10 5L8 8M9 6 14 3M10 8C14 9 15 4 12 3" stroke="#333" strokeWidth="1.200" /></Icon>
          <span>英</span>
        </Tray>
      </Taskbar>

      <SymbolDialog />
      <Subtitle>6.点击【关闭】</Subtitle>
      <Watermark><span>天奇</span><WatermarkDot>·</WatermarkDot><span>视</span></Watermark>
    </Screen>
  );
}
